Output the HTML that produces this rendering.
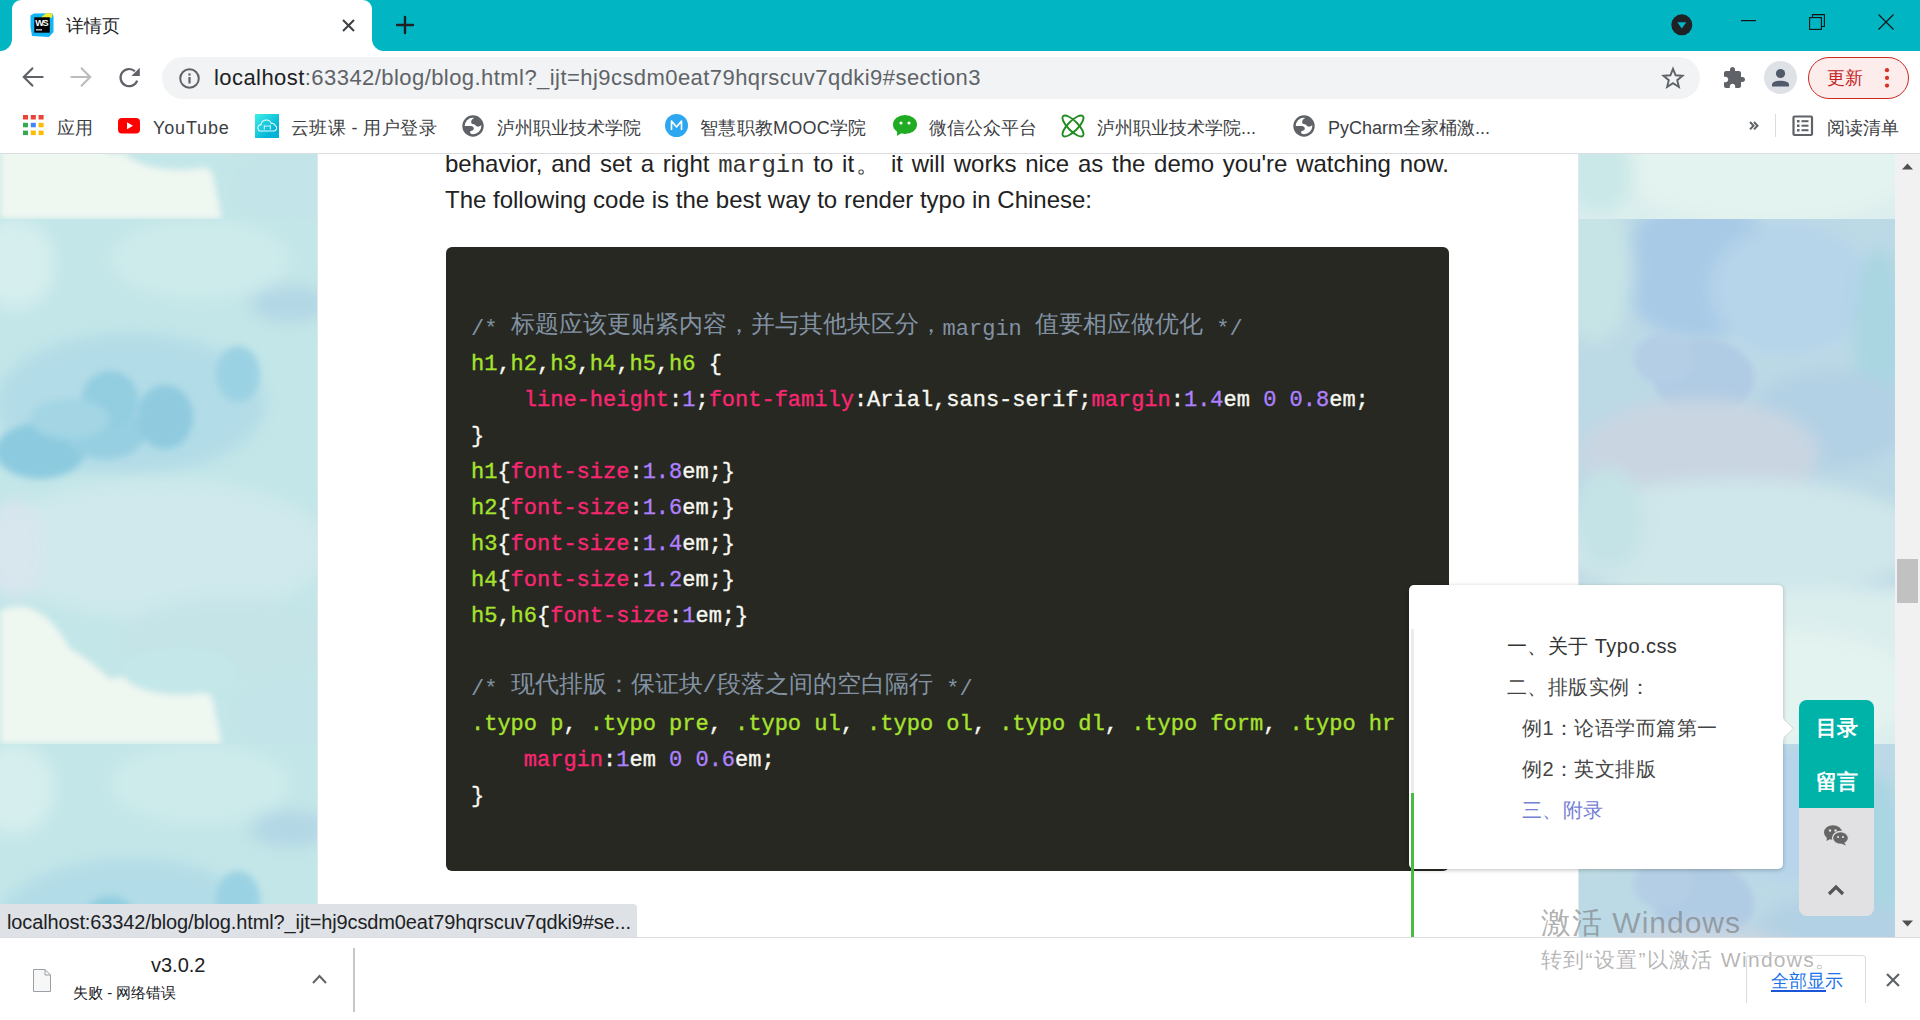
<!DOCTYPE html>
<html><head><meta charset="utf-8">
<style>
*{margin:0;padding:0;box-sizing:border-box}
html,body{width:1920px;height:1020px;overflow:hidden;background:#fff;font-family:"Liberation Sans",sans-serif;position:relative}
.abs{position:absolute}
.t{position:absolute;white-space:nowrap;line-height:1}
svg{position:absolute;overflow:visible}
#tabs{left:0;top:0;width:1920px;height:51px;background:#02b5c3}
#tab{left:12px;top:0;width:360px;height:51px;background:#fff;border-radius:9px 9px 0 0}
#toolbar{left:0;top:51px;width:1920px;height:53px;background:#fff}
#omni{left:162px;top:57px;width:1538px;height:42px;background:#f1f3f4;border-radius:21px}
#bm{left:0;top:104px;width:1920px;height:50px;background:#fff;border-bottom:1px solid #dadce0}
#content{left:0;top:154px;width:1920px;height:783px;overflow:hidden}
#bgl{left:0;top:0;width:317px;height:783px}
#bgr{left:1579px;top:0;width:316px;height:783px}
#col{left:317px;top:0;width:1262px;height:783px;background:#fff;border-left:1px solid #e3e6ea;border-right:1px solid #e3e6ea}
#sb{left:1895px;top:0;width:25px;height:783px;background:#f1f1f1}
#shelf{left:0;top:937px;width:1920px;height:83px;background:#fff;border-top:1px solid #dadce0}

.para{font-size:24px;color:#222;line-height:36px}
.cn{font-family:"Liberation Mono",monospace;font-size:24px;color:#333}
.code{font-family:"Liberation Mono",monospace;font-size:22px;color:#f8f8f2;line-height:36px;font-weight:normal;-webkit-text-stroke:0.35px}
.cl{height:36px;white-space:pre}
.cm{color:#8292a2;font-weight:normal;-webkit-text-stroke:0}
.zh{font-size:24px;position:relative;top:-3px}
.g{color:#a6e22e}
.p{color:#f92672}
.n{color:#ae81ff}
.toct{font-size:20px;letter-spacing:0.45px}
.tileL{left:0;width:317px;height:525px;background:
 radial-gradient(ellipse 110px 55px at 70px 225px,#8dcbe0 0%,rgba(141,203,224,0) 100%),
 radial-gradient(ellipse 90px 50px at 170px 205px,#9ad1e3 0%,rgba(154,209,227,0) 100%),
 radial-gradient(ellipse 160px 90px at 130px 210px,#acd9e6 0%,rgba(172,217,230,0) 100%),
 radial-gradient(ellipse 140px 70px at 90px 500px,#f1f8f3 30%,rgba(241,248,243,0) 100%),
 radial-gradient(ellipse 100px 60px at 30px 20px,#dff1ef 0%,rgba(223,241,239,0) 100%),
 linear-gradient(#cbe8ea,#d0eaec 60%,#d8eeee);}
.tileR{left:0;width:316px;height:525px;background:
 radial-gradient(ellipse 130px 90px at 110px 80px,#a8cbe6 0%,rgba(168,203,230,0) 100%),
 radial-gradient(ellipse 80px 60px at 130px 210px,#b2c9e2 0%,rgba(178,201,226,0) 100%),
 radial-gradient(ellipse 120px 70px at 80px 300px,#d6dbe2 0%,rgba(214,219,226,0) 100%),
 radial-gradient(ellipse 160px 120px at 160px 450px,#e2f2ef 0%,rgba(226,242,239,0) 100%),
 linear-gradient(#b5d6e7,#bcd9e6 50%,#d2e9eb 75%,#e0f1ef);}
.bmt{font-size:18px;color:#3c4043;top:119px}
</style></head><body>
<!-- TAB STRIP -->
<div id="tabs" class="abs"></div>
<div id="tab" class="abs"></div>
<!-- flares -->
<svg style="left:0;top:39px" width="12" height="12"><path d="M0 12 A12 12 0 0 0 12 0 L12 12 Z" fill="#fff"/></svg>
<svg style="left:372px;top:39px" width="12" height="12"><path d="M0 0 A12 12 0 0 0 12 12 L0 12 Z" fill="#fff"/></svg>
<!-- favicon -->
<svg style="left:30px;top:13px" width="24" height="24">
  <path d="M0.5 2.5 L4 0.5 L22 0.3 L23.5 3 L23.5 19 L19 24 L2 23 L0.5 14 Z" fill="#12b4f5"/>
  <path d="M10.5 4.8 L16 0.3 L22.5 0.3 L22 4.8 Z" fill="#f2ea2a"/>
  <rect x="4.3" y="4.3" width="15.5" height="15.4" fill="#000"/>
  <text x="5.2" y="12.6" font-family="Liberation Sans" font-weight="bold" font-size="9.2" fill="#fff" textLength="13.4">WS</text>
  <rect x="6" y="16.2" width="6" height="1.3" fill="#ddd"/>
</svg>
<div class="t" style="left:66px;top:17px;font-size:18px;color:#202124">详情页</div>
<svg style="left:342px;top:19px" width="13" height="13"><path d="M1 1 L12 12 M12 1 L1 12" stroke="#3c4043" stroke-width="2"/></svg>
<svg style="left:396px;top:16px" width="18" height="18"><path d="M9 1 V17 M1 9 H17" stroke="#202124" stroke-width="2.4" stroke-linecap="round"/></svg>
<!-- window controls -->
<svg style="left:1671px;top:14px" width="22" height="22"><circle cx="10.8" cy="10.8" r="10.5" fill="#202124"/><path d="M6.3 8.2 L15.3 8.2 L10.8 14.6 Z" fill="#02b5c3"/></svg>
<svg style="left:1741px;top:20px" width="16" height="2"><rect x="0" y="0" width="15" height="1.2" fill="#111"/></svg>
<svg style="left:1809px;top:14px" width="16" height="16"><path d="M3.5 3 V0.6 H15.4 V12.5 H12.8" fill="none" stroke="#111" stroke-width="1.1"/><rect x="0.6" y="3.6" width="11.8" height="11.8" fill="none" stroke="#111" stroke-width="1.1"/></svg>
<svg style="left:1878px;top:14px" width="16" height="16"><path d="M0.5 0.5 L15.5 15.5 M15.5 0.5 L0.5 15.5" stroke="#111" stroke-width="1.1"/></svg>

<!-- TOOLBAR -->
<div id="toolbar" class="abs"></div>
<svg style="left:22px;top:66px" width="22" height="22"><path d="M20.6 11 H2.2 M10.3 2.4 L1.8 11 L10.3 19.6" fill="none" stroke="#5f6368" stroke-width="2.2" stroke-linecap="round"/></svg>
<svg style="left:70px;top:66px" width="22" height="22"><path d="M1.4 11 H19.8 M11.7 2.4 L20.2 11 L11.7 19.6" fill="none" stroke="#babcbe" stroke-width="2.2" stroke-linecap="round"/></svg>
<svg style="left:118px;top:66px" width="24" height="24"><path d="M19.2 14.6 A8.6 8.6 0 1 1 16.9 5.2" fill="none" stroke="#5f6368" stroke-width="2.2"/><path d="M21.8 1.7 V9.9 H13.4 Z" fill="#5f6368"/></svg>
<div id="omni" class="abs"></div>
<svg style="left:179px;top:68px" width="21" height="21"><circle cx="10.5" cy="10.5" r="9.3" fill="none" stroke="#5f6368" stroke-width="2"/><rect x="9.4" y="9" width="2.2" height="6.5" fill="#5f6368"/><rect x="9.4" y="5.4" width="2.2" height="2.2" fill="#5f6368"/></svg>
<div class="t" id="url" style="left:214px;top:67px;font-size:22px;letter-spacing:0.44px;color:#5f6368"><span style="color:#202124">localhost</span>:63342/blog/blog.html?_ijt=hj9csdm0eat79hqrscuv7qdki9#section3</div>
<svg style="left:1662px;top:67px" width="22" height="22"><path d="M11 1.8 L13.6 8.3 L20.5 8.7 L15.2 13.2 L16.9 20 L11 16.2 L5.1 20 L6.8 13.2 L1.5 8.7 L8.4 8.3 Z" fill="none" stroke="#5f6368" stroke-width="1.9" stroke-linejoin="miter"/></svg>
<svg style="left:1722px;top:66px" width="24" height="24" viewBox="0 0 24 24"><path d="M20.5 11H19V7c0-1.1-.9-2-2-2h-4V3.5C13 2.12 11.88 1 10.5 1S8 2.12 8 3.5V5H4c-1.1 0-1.99.9-1.99 2v3.8H3.5c1.49 0 2.7 1.21 2.7 2.7s-1.21 2.7-2.7 2.7H2V20c0 1.1.9 2 2 2h3.8v-1.5c0-1.490 1.21-2.7 2.7-2.7 1.49 0 2.7 1.21 2.7 2.7V22H17c1.1 0 2-.9 2-2v-4h1.5c1.38 0 2.5-1.12 2.5-2.5S21.88 11 20.5 11z" fill="#5f6368"/></svg>
<svg style="left:1764px;top:61px" width="34" height="34"><circle cx="16.5" cy="16.5" r="16.5" fill="#dee1e6"/><circle cx="16.5" cy="12.5" r="4.6" fill="#505a6a"/><path d="M8 23.5 C8 18.5 25 18.5 25 23.5 V25.5 H8 Z" fill="#505a6a"/></svg>
<div class="abs" style="left:1808px;top:57px;width:101px;height:42px;border:1.6px solid #cc2a22;border-radius:21px;background:#fceceb"></div>
<div class="t" style="left:1827px;top:69px;font-size:18px;color:#c5221f">更新</div>
<svg style="left:1883px;top:65.5px" width="8" height="28"><circle cx="4" cy="4.2" r="2.1" fill="#d93025"/><circle cx="4" cy="11.9" r="2.1" fill="#d93025"/><circle cx="4" cy="19.6" r="2.1" fill="#d93025"/></svg>

<!-- BOOKMARKS -->
<div id="bm" class="abs"></div>
<svg style="left:23px;top:115px" width="21" height="21">
 <rect x="0" y="0" width="5" height="4.5" fill="#ea4335"/><rect x="7.8" y="0" width="5" height="4.5" fill="#ea4335"/><rect x="15.6" y="0" width="5" height="4.5" fill="#ea4335"/>
 <rect x="0" y="7.8" width="5" height="4.5" fill="#34a853"/><rect x="7.8" y="7.8" width="5" height="4.5" fill="#4285f4"/><rect x="15.6" y="7.8" width="5" height="4.5" fill="#fbbc05"/>
 <rect x="0" y="15.6" width="5" height="4.5" fill="#34a853"/><rect x="7.8" y="15.6" width="5" height="4.5" fill="#fbbc05"/><rect x="15.6" y="15.6" width="5" height="4.5" fill="#fbbc05"/>
</svg>
<div class="t bmt" style="left:57px">应用</div>
<svg style="left:118px;top:118px" width="22" height="16"><rect x="0" y="0" width="22" height="15.5" rx="4" fill="#ff0000"/><path d="M9 4.3 L15 7.8 L9 11.3 Z" fill="#fff"/></svg>
<div class="t bmt" style="left:153px;letter-spacing:0.85px">YouTube</div>
<svg style="left:255px;top:114px" width="24" height="24"><defs><linearGradient id="yb" x1="0" y1="0" x2="1" y2="1"><stop offset="0" stop-color="#3ef0e8"/><stop offset="0.7" stop-color="#06b5d6"/><stop offset="1" stop-color="#03afd8"/></linearGradient></defs><rect width="24" height="24" fill="url(#yb)"/><path d="M6.2 17 H19 A2.9 2.9 0 0 0 20.2 11.6 A3 3 0 0 0 16.3 9.6 A5.3 5.3 0 0 0 6 10.6 A3.2 3.2 0 0 0 6.2 17 Z" fill="none" stroke="#e6fbfd" stroke-width="1.1"/><path d="M9.3 15.5 V11.6 C10.5 12.4 11.5 12.4 12.5 11.9 C13.5 12.4 14.5 12.2 15.3 11.4 V15.5" fill="none" stroke="#e6fbfd" stroke-width="1"/></svg>
<div class="t bmt" style="left:291px;letter-spacing:0.4px">云班课 - 用户登录</div>
<svg style="left:462px;top:115px" width="22" height="22"><circle cx="11" cy="11" r="10.7" fill="#5f6368"/><circle cx="11" cy="11" r="8.3" fill="#fff"/><g clip-path="url(#gclip)"><path d="M12.3 1.5 L12.3 3 C11 3.6 9.6 4.6 9.3 6 C9 7.5 9.3 8.8 10.6 9.1 C12 9.3 13 9.6 13.6 10.5 C14.5 11.8 16.5 12 18 11 L21.5 9 L20 3 Z" fill="#5f6368"/><path d="M0.5 11 L8.8 11.1 C10.6 11.2 11.8 12.2 11.8 13.6 C11.8 15 10.9 15.6 9.6 15.8 C8.4 16 7.9 16.8 8.2 17.8 L9.5 21 L1 18 Z" fill="#5f6368"/></svg>
<div class="t bmt" style="left:497px">泸州职业技术学院</div>
<svg style="left:665px;top:114px" width="23" height="23"><circle cx="11.5" cy="11.5" r="11.5" fill="#2ea7f1"/><path d="M6.5 16 V7 L11.5 13 L16.5 7 V16" fill="none" stroke="#fff" stroke-width="1.6" stroke-linejoin="round"/></svg>
<div class="t bmt" style="left:700px;letter-spacing:0.25px">智慧职教MOOC学院</div>
<svg style="left:893px;top:115px" width="25" height="22"><ellipse cx="12" cy="9.5" rx="12" ry="9.5" fill="#20ac22"/><path d="M4 15 L4.2 21 L10 17 Z" fill="#20ac22"/><circle cx="8" cy="8" r="1.6" fill="#fff"/><circle cx="16" cy="8" r="1.6" fill="#fff"/></svg>
<div class="t bmt" style="left:929px">微信公众平台</div>
<svg style="left:1061px;top:114px" width="24" height="24"><ellipse cx="12" cy="12" rx="5" ry="14" transform="rotate(45 12 12)" fill="none" stroke="#228b22" stroke-width="1.9"/><ellipse cx="12" cy="12" rx="5" ry="14" transform="rotate(-45 12 12)" fill="none" stroke="#228b22" stroke-width="1.9"/></svg>
<div class="t bmt" style="left:1097px">泸州职业技术学院...</div>
<svg style="left:1293px;top:115px" width="22" height="22"><circle cx="11" cy="11" r="10.7" fill="#5f6368"/><circle cx="11" cy="11" r="8.3" fill="#fff"/><g clip-path="url(#gclip)"><path d="M12.3 1.5 L12.3 3 C11 3.6 9.6 4.6 9.3 6 C9 7.5 9.3 8.8 10.6 9.1 C12 9.3 13 9.6 13.6 10.5 C14.5 11.8 16.5 12 18 11 L21.5 9 L20 3 Z" fill="#5f6368"/><path d="M0.5 11 L8.8 11.1 C10.6 11.2 11.8 12.2 11.8 13.6 C11.8 15 10.9 15.6 9.6 15.8 C8.4 16 7.9 16.8 8.2 17.8 L9.5 21 L1 18 Z" fill="#5f6368"/></svg>
<div class="t bmt" style="left:1328px">PyCharm全家桶激...</div>
<svg style="left:1749px;top:121px" width="10" height="10"><path d="M1 1 L4.5 4.7 L1 8.4 M5 1 L8.5 4.7 L5 8.4" fill="none" stroke="#5f6368" stroke-width="2"/></svg>
<div class="abs" style="left:1775px;top:114px;width:1px;height:23px;background:#dadce0"></div>
<svg style="left:1792px;top:115px" width="22" height="22"><rect x="1.5" y="1.5" width="18.5" height="18.5" rx="1" fill="none" stroke="#5f6368" stroke-width="2.2"/><rect x="5" y="5" width="2.5" height="2.5" fill="#5f6368"/><rect x="5" y="9.5" width="2.5" height="2.5" fill="#5f6368"/><rect x="5" y="14" width="2.5" height="2.5" fill="#5f6368"/><rect x="9.5" y="5.2" width="7" height="2" fill="#5f6368"/><rect x="9.5" y="9.7" width="7" height="2" fill="#5f6368"/><rect x="9.5" y="14.2" width="7" height="2" fill="#5f6368"/></svg>
<div class="t bmt" style="left:1827px;top:119px">阅读清单</div>

<!-- CONTENT -->
<div id="content" class="abs">
  <div id="bgl" class="abs"><svg width="0" height="0" style="position:absolute"><defs>
<clipPath id="gclip"><circle cx="11" cy="11" r="9"/></clipPath>
<filter id="bl2" x="-20%" y="-20%" width="140%" height="140%"><feGaussianBlur stdDeviation="3.5"/></filter>
<filter id="bl3" x="-20%" y="-20%" width="140%" height="140%"><feGaussianBlur stdDeviation="3"/></filter>
<filter id="bl6" x="-30%" y="-30%" width="160%" height="160%"><feGaussianBlur stdDeviation="8"/></filter>
</defs></svg><svg class="abs" style="left:0;top:-460px;overflow:hidden" width="317" height="525" viewBox="0 0 317 525">
<rect width="317" height="525" fill="#c3e6e8"/>
<g filter="url(#bl6)">
<ellipse cx="15" cy="45" rx="40" ry="45" fill="#d6eeee"/>
<ellipse cx="200" cy="40" rx="90" ry="40" fill="#cdebeb"/>
<ellipse cx="290" cy="85" rx="40" ry="18" fill="#b3d7e5"/>
<ellipse cx="130" cy="185" rx="135" ry="70" fill="#b2dce7"/>
</g>
<g filter="url(#bl2)">
<ellipse cx="40" cy="232" rx="45" ry="28" fill="#8ccadf"/>
<ellipse cx="105" cy="215" rx="40" ry="25" fill="#96cfe1"/>
<ellipse cx="110" cy="180" rx="28" ry="28" fill="#92cde0"/>
<ellipse cx="165" cy="198" rx="28" ry="32" fill="#8fcadf"/>
<ellipse cx="238" cy="155" rx="22" ry="28" fill="#9bd2e3"/>
<ellipse cx="70" cy="200" rx="40" ry="20" fill="#a3d5e4"/>
</g>
<g filter="url(#bl6)">
<ellipse cx="160" cy="330" rx="170" ry="70" fill="#cfe9ec"/>
<ellipse cx="15" cy="330" rx="30" ry="50" fill="#d8e6ee"/>
<ellipse cx="230" cy="420" rx="110" ry="40" fill="#c4e4e8"/>
</g>
<g filter="url(#bl3)">
<path d="M0 392 C25 380 50 392 70 430 C90 440 100 452 110 460 C150 452 190 462 212 478 L222 525 L0 525 Z" fill="#eff7f1"/><ellipse cx="180" cy="452" rx="58" ry="24" fill="#c4e7e9"/>
<ellipse cx="290" cy="495" rx="60" ry="35" fill="#c3e4e8"/>
</g>
</svg><svg class="abs" style="left:0;top:65px;overflow:hidden" width="317" height="525" viewBox="0 0 317 525">
<rect width="317" height="525" fill="#c3e6e8"/>
<g filter="url(#bl6)">
<ellipse cx="15" cy="45" rx="40" ry="45" fill="#d6eeee"/>
<ellipse cx="200" cy="40" rx="90" ry="40" fill="#cdebeb"/>
<ellipse cx="290" cy="85" rx="40" ry="18" fill="#b3d7e5"/>
<ellipse cx="130" cy="185" rx="135" ry="70" fill="#b2dce7"/>
</g>
<g filter="url(#bl2)">
<ellipse cx="40" cy="232" rx="45" ry="28" fill="#8ccadf"/>
<ellipse cx="105" cy="215" rx="40" ry="25" fill="#96cfe1"/>
<ellipse cx="110" cy="180" rx="28" ry="28" fill="#92cde0"/>
<ellipse cx="165" cy="198" rx="28" ry="32" fill="#8fcadf"/>
<ellipse cx="238" cy="155" rx="22" ry="28" fill="#9bd2e3"/>
<ellipse cx="70" cy="200" rx="40" ry="20" fill="#a3d5e4"/>
</g>
<g filter="url(#bl6)">
<ellipse cx="160" cy="330" rx="170" ry="70" fill="#cfe9ec"/>
<ellipse cx="15" cy="330" rx="30" ry="50" fill="#d8e6ee"/>
<ellipse cx="230" cy="420" rx="110" ry="40" fill="#c4e4e8"/>
</g>
<g filter="url(#bl3)">
<path d="M0 392 C25 380 50 392 70 430 C90 440 100 452 110 460 C150 452 190 462 212 478 L222 525 L0 525 Z" fill="#eff7f1"/><ellipse cx="180" cy="452" rx="58" ry="24" fill="#c4e7e9"/>
<ellipse cx="290" cy="495" rx="60" ry="35" fill="#c3e4e8"/>
</g>
</svg><svg class="abs" style="left:0;top:590px;overflow:hidden" width="317" height="525" viewBox="0 0 317 525">
<rect width="317" height="525" fill="#c3e6e8"/>
<g filter="url(#bl6)">
<ellipse cx="15" cy="45" rx="40" ry="45" fill="#d6eeee"/>
<ellipse cx="200" cy="40" rx="90" ry="40" fill="#cdebeb"/>
<ellipse cx="290" cy="85" rx="40" ry="18" fill="#b3d7e5"/>
<ellipse cx="130" cy="185" rx="135" ry="70" fill="#b2dce7"/>
</g>
<g filter="url(#bl2)">
<ellipse cx="40" cy="232" rx="45" ry="28" fill="#8ccadf"/>
<ellipse cx="105" cy="215" rx="40" ry="25" fill="#96cfe1"/>
<ellipse cx="110" cy="180" rx="28" ry="28" fill="#92cde0"/>
<ellipse cx="165" cy="198" rx="28" ry="32" fill="#8fcadf"/>
<ellipse cx="238" cy="155" rx="22" ry="28" fill="#9bd2e3"/>
<ellipse cx="70" cy="200" rx="40" ry="20" fill="#a3d5e4"/>
</g>
<g filter="url(#bl6)">
<ellipse cx="160" cy="330" rx="170" ry="70" fill="#cfe9ec"/>
<ellipse cx="15" cy="330" rx="30" ry="50" fill="#d8e6ee"/>
<ellipse cx="230" cy="420" rx="110" ry="40" fill="#c4e4e8"/>
</g>
<g filter="url(#bl3)">
<path d="M0 392 C25 380 50 392 70 430 C90 440 100 452 110 460 C150 452 190 462 212 478 L222 525 L0 525 Z" fill="#eff7f1"/><ellipse cx="180" cy="452" rx="58" ry="24" fill="#c4e7e9"/>
<ellipse cx="290" cy="495" rx="60" ry="35" fill="#c3e4e8"/>
</g>
</svg></div>
  <div id="col" class="abs"></div>
  <div id="bgr" class="abs"><svg class="abs" style="left:0;top:-460px;overflow:hidden" width="316" height="525" viewBox="0 0 316 525">
<rect width="316" height="525" fill="#bcd9e6"/>
<g filter="url(#bl6)">
<ellipse cx="120" cy="50" rx="80" ry="70" fill="#a8cae6"/>
<ellipse cx="210" cy="70" rx="80" ry="65" fill="#b6d4ea"/>
<ellipse cx="15" cy="50" rx="40" ry="75" fill="#c6e3e6"/>
<ellipse cx="300" cy="120" rx="25" ry="90" fill="#a9d6e1"/>
<ellipse cx="250" cy="200" rx="80" ry="50" fill="#b3d1e4"/>
</g>
<g filter="url(#bl3)">
<ellipse cx="125" cy="160" rx="50" ry="40" fill="#b0cbe4"/>
<ellipse cx="85" cy="140" rx="30" ry="25" fill="#b3cee5"/>
</g>
<g filter="url(#bl6)">
<ellipse cx="120" cy="235" rx="120" ry="55" fill="#c9d6e2"/>
<ellipse cx="160" cy="320" rx="190" ry="60" fill="#cfe6ea"/>
<ellipse cx="30" cy="300" rx="35" ry="50" fill="#c4e3e6"/>
<rect x="-20" y="370" width="360" height="180" fill="#dbeeee"/>
<ellipse cx="190" cy="470" rx="150" ry="60" fill="#e3f3ef"/>
<ellipse cx="20" cy="480" rx="35" ry="40" fill="#cbe8e8"/>
</g>
</svg><svg class="abs" style="left:0;top:65px;overflow:hidden" width="316" height="525" viewBox="0 0 316 525">
<rect width="316" height="525" fill="#bcd9e6"/>
<g filter="url(#bl6)">
<ellipse cx="120" cy="50" rx="80" ry="70" fill="#a8cae6"/>
<ellipse cx="210" cy="70" rx="80" ry="65" fill="#b6d4ea"/>
<ellipse cx="15" cy="50" rx="40" ry="75" fill="#c6e3e6"/>
<ellipse cx="300" cy="120" rx="25" ry="90" fill="#a9d6e1"/>
<ellipse cx="250" cy="200" rx="80" ry="50" fill="#b3d1e4"/>
</g>
<g filter="url(#bl3)">
<ellipse cx="125" cy="160" rx="50" ry="40" fill="#b0cbe4"/>
<ellipse cx="85" cy="140" rx="30" ry="25" fill="#b3cee5"/>
</g>
<g filter="url(#bl6)">
<ellipse cx="120" cy="235" rx="120" ry="55" fill="#c9d6e2"/>
<ellipse cx="160" cy="320" rx="190" ry="60" fill="#cfe6ea"/>
<ellipse cx="30" cy="300" rx="35" ry="50" fill="#c4e3e6"/>
<rect x="-20" y="370" width="360" height="180" fill="#dbeeee"/>
<ellipse cx="190" cy="470" rx="150" ry="60" fill="#e3f3ef"/>
<ellipse cx="20" cy="480" rx="35" ry="40" fill="#cbe8e8"/>
</g>
</svg><svg class="abs" style="left:0;top:590px;overflow:hidden" width="316" height="525" viewBox="0 0 316 525">
<rect width="316" height="525" fill="#bcd9e6"/>
<g filter="url(#bl6)">
<ellipse cx="120" cy="50" rx="80" ry="70" fill="#a8cae6"/>
<ellipse cx="210" cy="70" rx="80" ry="65" fill="#b6d4ea"/>
<ellipse cx="15" cy="50" rx="40" ry="75" fill="#c6e3e6"/>
<ellipse cx="300" cy="120" rx="25" ry="90" fill="#a9d6e1"/>
<ellipse cx="250" cy="200" rx="80" ry="50" fill="#b3d1e4"/>
</g>
<g filter="url(#bl3)">
<ellipse cx="125" cy="160" rx="50" ry="40" fill="#b0cbe4"/>
<ellipse cx="85" cy="140" rx="30" ry="25" fill="#b3cee5"/>
</g>
<g filter="url(#bl6)">
<ellipse cx="120" cy="235" rx="120" ry="55" fill="#c9d6e2"/>
<ellipse cx="160" cy="320" rx="190" ry="60" fill="#cfe6ea"/>
<ellipse cx="30" cy="300" rx="35" ry="50" fill="#c4e3e6"/>
<rect x="-20" y="370" width="360" height="180" fill="#dbeeee"/>
<ellipse cx="190" cy="470" rx="150" ry="60" fill="#e3f3ef"/>
<ellipse cx="20" cy="480" rx="35" ry="40" fill="#cbe8e8"/>
</g>
</svg></div>
  <div id="sb" class="abs">
    <svg style="left:7px;top:9px" width="11" height="7"><path d="M0 6.5 L5.5 0.5 L11 6.5 Z" fill="#505050"/></svg>
    <div class="abs" style="left:2px;top:405px;width:21px;height:44px;background:#c1c1c1"></div>
    <svg style="left:7px;top:766px" width="11" height="7"><path d="M0 0.5 L5.5 6.5 L11 0.5 Z" fill="#505050"/></svg>
  </div>
</div>
<!-- paragraph -->
<div class="t para" style="left:445px;top:146px;width:1004px;text-align:justify;text-align-last:justify;white-space:normal">behavior, and set a right <span class="cn">margin</span> to it。 it will works nice as the demo you're watching now.</div>
<div class="t para" style="left:445px;top:182px">The following code is the best way to render typo in Chinese:</div>
<!-- code block -->
<div class="abs" id="code" style="left:446px;top:247px;width:1003px;height:624px;background:#272822;border-radius:6px"></div>
<div class="abs code" style="left:471px;top:311px"><div class="cl"><span class="cm">/* <span class="zh">标题应该更贴紧内容，并与其他块区分，</span>margin <span class="zh">值要相应做优化</span> */</span></div><div class="cl"><span class="g">h1</span>,<span class="g">h2</span>,<span class="g">h3</span>,<span class="g">h4</span>,<span class="g">h5</span>,<span class="g">h6</span> {</div><div class="cl">    <span class="p">line-height</span>:<span class="n">1</span>;<span class="p">font-family</span>:Arial,sans-serif;<span class="p">margin</span>:<span class="n">1.4</span>em <span class="n">0</span> <span class="n">0.8</span>em;</div><div class="cl">}</div><div class="cl"><span class="g">h1</span>{<span class="p">font-size</span>:<span class="n">1.8</span>em;}</div><div class="cl"><span class="g">h2</span>{<span class="p">font-size</span>:<span class="n">1.6</span>em;}</div><div class="cl"><span class="g">h3</span>{<span class="p">font-size</span>:<span class="n">1.4</span>em;}</div><div class="cl"><span class="g">h4</span>{<span class="p">font-size</span>:<span class="n">1.2</span>em;}</div><div class="cl"><span class="g">h5</span>,<span class="g">h6</span>{<span class="p">font-size</span>:<span class="n">1</span>em;}</div><div class="cl"> </div><div class="cl"><span class="cm">/* <span class="zh">现代排版：保证块/段落之间的空白隔行</span> */</span></div><div class="cl"><span class="g">.typo p</span>, <span class="g">.typo pre</span>, <span class="g">.typo ul</span>, <span class="g">.typo ol</span>, <span class="g">.typo dl</span>, <span class="g">.typo form</span>, <span class="g">.typo hr</span></div><div class="cl">    <span class="p">margin</span>:<span class="n">1</span>em <span class="n">0</span> <span class="n">0.6</span>em;</div><div class="cl">}</div></div>
<!-- toc popup -->
<div class="abs" id="toc" style="left:1409px;top:585px;width:374px;height:284px;background:#fff;border-radius:5px;box-shadow:0 1px 4px rgba(0,0,0,0.25)"></div>
<svg style="left:1782px;top:718px" width="13" height="22"><path d="M1 0.5 L11.5 10.5 L1 20.5" fill="#fff" stroke="#d5d5d5" stroke-width="1"/><rect x="0" y="0" width="1.5" height="22" fill="#fff"/></svg>
<div class="t toct" style="left:1507px;top:636px;color:#333">一、关于 Typo.css</div>
<div class="t toct" style="left:1507px;top:677px;color:#444">二、排版实例：</div>
<div class="t toct" style="left:1522px;top:718px;color:#444">例1：论语学而篇第一</div>
<div class="t toct" style="left:1522px;top:759px;color:#444">例2：英文排版</div>
<div class="t toct" style="left:1522px;top:800px;color:#7480d4">三、附录</div>
<!-- toc progress line -->
<div class="abs" style="left:1411px;top:629px;width:3px;height:164px;background:#ececec"></div>
<div class="abs" style="left:1411px;top:793px;width:3px;height:144px;background:#4cbb45"></div>
<!-- side buttons -->
<div class="abs" style="left:1799px;top:700px;width:75px;height:216px;background:#e1e1e4;border-radius:8px;overflow:hidden">
  <div class="abs" style="left:0;top:0;width:75px;height:108px;background:#00b3a8"></div>
</div>
<div class="t" style="left:1816px;top:717px;font-size:21px;font-weight:bold;color:#fff">目录</div>
<div class="t" style="left:1816px;top:771px;font-size:21px;font-weight:bold;color:#fff">留言</div>
<svg style="left:1824px;top:825px" width="25" height="21"><ellipse cx="9" cy="7.5" rx="9" ry="7.3" fill="#666"/><path d="M3 12 L2.5 16 L7 13.5 Z" fill="#666"/><ellipse cx="16.5" cy="13" rx="8" ry="6.5" fill="#666" stroke="#e1e1e4" stroke-width="1.3"/><path d="M20 17.5 L22 20.5 L17 18.5 Z" fill="#666"/><circle cx="6" cy="5.5" r="1.2" fill="#e1e1e4"/><circle cx="11.5" cy="5.5" r="1.2" fill="#e1e1e4"/><circle cx="14" cy="12" r="1.1" fill="#e1e1e4"/><circle cx="19" cy="12" r="1.1" fill="#e1e1e4"/></svg>
<svg style="left:1827px;top:884px" width="18" height="12"><path d="M2 10 L9 3 L16 10" fill="none" stroke="#555" stroke-width="3.2"/></svg>
<!-- windows watermark -->
<div class="t" style="left:1541px;top:908px;font-size:30px;letter-spacing:1px;color:rgba(110,110,110,0.55)">激活 Windows</div>
<!-- status bubble -->
<div class="abs" style="left:0;top:904px;width:637px;height:34px;background:#dee1e6;border-radius:0 4px 0 0"></div>
<div class="t" id="stat" style="left:7px;top:912px;font-size:20px;letter-spacing:-0.12px;color:#202124">localhost:63342/blog/blog.html?_ijt=hj9csdm0eat79hqrscuv7qdki9#se...</div>
<!-- shelf -->
<div id="shelf" class="abs"></div>
<svg style="left:33px;top:969px" width="18" height="23"><path d="M0.5 0.5 H12 L17.5 6 V22.5 H0.5 Z" fill="#f7f7f7" stroke="#9aa0a6" stroke-width="1"/><path d="M12 0.5 V6 H17.5" fill="none" stroke="#9aa0a6" stroke-width="1"/></svg>
<div class="t" style="left:151px;top:955px;font-size:20px;color:#202124">v3.0.2</div>
<div class="t" style="left:73px;top:985px;font-size:15px;color:#202124">失败 - 网络错误</div>
<svg style="left:312px;top:974px" width="15" height="10"><path d="M1 9 L7.5 2 L14 9" fill="none" stroke="#5f6368" stroke-width="2"/></svg>
<div class="abs" style="left:353px;top:948px;width:2px;height:64px;background:#c4c7cc"></div>
<div class="t" style="left:1541px;top:949px;font-size:21px;letter-spacing:1.3px;color:rgba(120,120,120,0.55)">转到“设置”以激活 Windows。</div>
<div class="abs" style="left:1746px;top:955px;width:120px;height:48px;border:1px solid #dadce0;border-bottom:none;border-radius:4px 4px 0 0"></div>
<div class="t" style="left:1771px;top:972px;font-size:18px;color:#1a73e8">全部显示</div>
<div class="abs" style="left:1771px;top:990px;width:55px;height:2px;background:#1a56d8"></div>
<svg style="left:1886px;top:973px" width="14" height="14"><path d="M1 1 L13 13 M13 1 L1 13" stroke="#5f6368" stroke-width="2.2"/></svg>
</body></html>
